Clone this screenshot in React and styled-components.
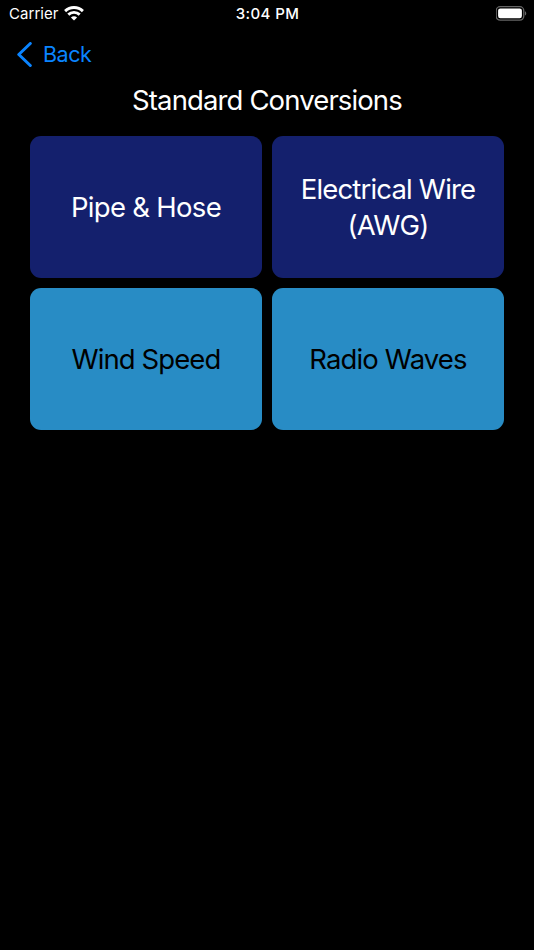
import React from 'react';
import styled, { createGlobalStyle } from 'styled-components';

const GlobalStyle = createGlobalStyle`
  * {
    box-sizing: border-box;
  }

  body {
    margin: 0;
    background-color: #000;
    font-family: Inter, 'Liberation Sans', sans-serif;
    -webkit-font-smoothing: antialiased;
  }
`;

const Screen = styled.div`
  display: flex;
  flex-direction: column;
  min-height: 950px;
  background-color: #000;
  color: #fff;
`;

const StatusBar = styled.header`
  display: grid;
  grid-template-columns: 1fr auto 1fr;
  align-items: center;
  height: 28px;
  padding: 0 7px 0 9px;
`;

const CarrierInfo = styled.div`
  display: flex;
  align-items: center;
  gap: 5px;
  font-size: 15px;
  line-height: 20px;
  letter-spacing: 0.05px;

  svg {
    margin-bottom: 2px;
  }
`;

const Clock = styled.div`
  margin-left: -1px;
  font-size: 15px;
  font-weight: 550;
  line-height: 20px;
  letter-spacing: 0.4px;
`;

const BatteryInfo = styled.div`
  display: flex;
  justify-content: flex-end;
  padding-bottom: 1px;
`;

const NavBar = styled.nav`
  display: flex;
  align-items: center;
  height: 53px;
  padding-left: 16px;
`;

const BackButton = styled.button`
  display: flex;
  align-items: center;
  gap: 10px;
  padding: 0;
  border: none;
  background: none;
  color: #0a84ff;
  font-family: inherit;
  font-size: 21.5px;
  line-height: 26px;
  letter-spacing: -0.45px;
  cursor: pointer;

  span {
    padding-bottom: 2px;
  }
`;

const Title = styled.h1`
  margin: 1px 0 0;
  font-size: 27.5px;
  font-weight: 390;
  line-height: 36px;
  letter-spacing: -0.88px;
  text-align: center;
`;

const ConversionGrid = styled.main`
  display: grid;
  grid-template-columns: 1fr 1fr;
  grid-auto-rows: 142px;
  gap: 10px;
  padding: 18px 30px 0;
`;

const ConversionCard = styled.button`
  padding: 0 20px 1px;
  border: none;
  border-radius: 11px;
  background-color: ${(props) => (props.$light ? '#288cc5' : '#14206d')};
  color: ${(props) => (props.$light ? '#000' : '#fff')};
  font-family: inherit;
  font-size: 27.5px;
  font-weight: 390;
  line-height: 36px;
  letter-spacing: ${(props) => props.$spacing}px;
  cursor: pointer;
`;

const conversions = [
    { name: 'Pipe & Hose', spacing: -0.7 },
    { name: 'Electrical Wire (AWG)', spacing: -0.82 },
    { name: 'Wind Speed', light: true, spacing: -0.92 },
    { name: 'Radio Waves', light: true, spacing: -0.88 },
];

function WifiIcon() {
    return (
        <svg width="20" height="15" viewBox="0 0 20 15" fill="none" stroke="#fff" strokeWidth="2.9">
            <path d="M1.1 5.1C6.1 .3 13.9 .3 18.9 5.1" />
            <path d="M4.3 8.6C7.5 5.6 12.5 5.6 15.7 8.6" />
            <path d="M10 14.4L6.9 11.4C8.6 9.9 11.4 9.9 13.1 11.4Z" fill="#fff" stroke="none" />
        </svg>
    );
}

function BatteryIcon() {
    return (
        <svg width="31" height="15" viewBox="0 0 31 15">
            <rect x="0.2" y="0.7" width="27.6" height="13.4" rx="4" fill="none" stroke="#666" strokeWidth="1.3" />
            <rect x="2.1" y="2.6" width="23.8" height="9.6" rx="2.2" fill="#fff" />
            <path d="M29.1 5.2C30.6 5.8 30.6 9 29.1 9.6Z" fill="#777" />
        </svg>
    );
}

function ChevronIcon() {
    return (
        <svg width="17" height="26" viewBox="0 0 17 26" fill="none" stroke="#0a84ff" strokeWidth="3" strokeLinecap="round" strokeLinejoin="round">
            <path d="M14.3 1.5L2.8 12.5L14.3 23.5" />
        </svg>
    );
}

function App() {
    return (
        <Screen>
            <GlobalStyle />
            <StatusBar>
                <CarrierInfo>
                    <span>Carrier</span>
                    <WifiIcon />
                </CarrierInfo>
                <Clock>3:04 PM</Clock>
                <BatteryInfo>
                    <BatteryIcon />
                </BatteryInfo>
            </StatusBar>
            <NavBar>
                <BackButton>
                    <ChevronIcon />
                    <span>Back</span>
                </BackButton>
            </NavBar>
            <Title>Standard Conversions</Title>
            <ConversionGrid>
                {conversions.map((conversion) => (
                    <ConversionCard key={conversion.name} $light={conversion.light} $spacing={conversion.spacing}>
                        {conversion.name}
                    </ConversionCard>
                ))}
            </ConversionGrid>
        </Screen>
    );
}

export default App;
